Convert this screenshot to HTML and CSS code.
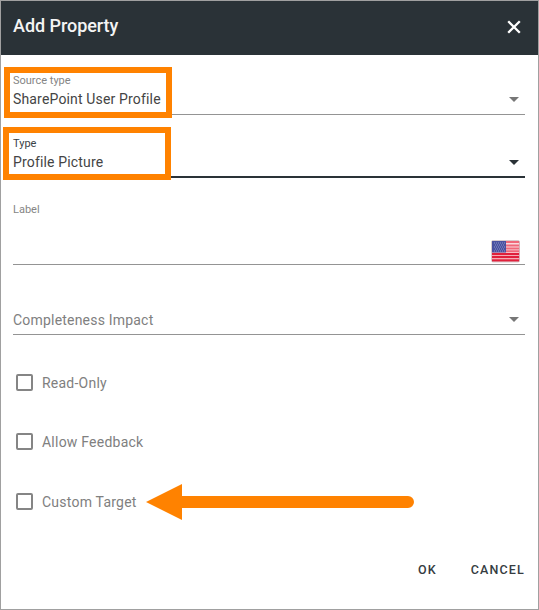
FILE: index.html
```html
<!DOCTYPE html>
<html lang="en">
<head>
<meta charset="utf-8">
<title>Add Property</title>
<link rel="stylesheet" href="styles.css">
</head>
<body>
<main class="dialog">
  <header class="header">
    <h1 class="title">Add Property</h1>
    <svg class="close" width="14" height="14" viewBox="0 0 14 14"><path d="M1.2 1.2 12.8 12.8M12.8 1.2 1.2 12.8"/></svg>
  </header>
  <form class="form">
    <div class="field source">
      <label class="label">Source type</label>
      <div class="value"><span class="text">SharePoint User Profile</span><svg class="caret" width="10" height="5" viewBox="0 0 10 5"><path d="M0 0h10L5 5z"/></svg></div>
      <div class="highlight highlight-source"></div>
    </div>
    <div class="field type">
      <label class="label">Type</label>
      <div class="value"><span class="text">Profile Picture</span><svg class="caret" width="10" height="5" viewBox="0 0 10 5"><path d="M0 0h10L5 5z"/></svg></div>
      <div class="highlight highlight-type"></div>
    </div>
    <div class="field name">
      <label class="label">Label</label>
      <svg class="flag" width="30" height="23" viewBox="0 0 30 23">
        <rect x="1" y="1" width="28" height="21" rx="1" fill="#fbd9dd"/>
        <path d="M1 1h27v2H1zM1 4.5h27v2H1zM1 7.5h27v2H1zM1 10.2h27v2H1z" fill="#f0687a"/>
        <path d="M1 13h27v2.2H1zM1 16.1h27v2.2H1zM1 19.2h27v2.2H1z" fill="#e0203b"/>
        <rect x="1" y="1" width="14" height="11.5" fill="#4a51a0"/>
        <path d="M3 3h11M4 5h10M3 7h11M4 9h10M3 11h11" stroke="#8f96c8" stroke-dasharray="1 1"/>
        <rect x=".5" y=".5" width="28" height="21.5" rx="1.5" fill="none" stroke="#a08088" stroke-opacity=".4"/>
      </svg>
    </div>
    <div class="field impact">
      <div class="value"><span class="text">Completeness Impact</span><svg class="caret" width="10" height="5" viewBox="0 0 10 5"><path d="M0 0h10L5 5z"/></svg></div>
    </div>
    <div class="checks">
      <div class="check"><span class="box"></span><span class="check-text">Read-Only</span></div>
      <div class="check"><span class="box"></span><span class="check-text">Allow Feedback</span></div>
      <div class="check"><span class="box"></span><span class="check-text">Custom Target</span>
        <svg class="arrow" width="269" height="38" viewBox="0 0 269 38"><path d="M0 19 36 1v12h226a6 6 0 0 1 0 12H36v12z"/></svg>
      </div>
    </div>
  </form>
  <footer class="actions"><span>OK</span><span>CANCEL</span></footer>
</main>
</body>
</html>
```
FILE: styles.css
```css
* { box-sizing: border-box; }
body { margin: 0; font-family: Roboto, sans-serif; background: #fff; }
.dialog { width: 539px; height: 610px; border: 1px solid #a0a0a0; overflow: hidden; }
.header { height: 54px; background: #2a3237; display: flex; align-items: center; justify-content: space-between; padding: 0 17px 4px 12px; }
.title { margin: 0; color: #f4f4f4; font-size: 18px; line-height: 24px; font-weight: 500; letter-spacing: -.05px; }
.close { fill: none; stroke: #fff; stroke-width: 2.3; margin-top: 2px; }
.form { padding: 0 13px 0 12px; }
.field { position: relative; border-bottom: 1px solid #949494; color: #444; }
.source { height: 60px; padding-top: 18px; }
.type { height: 63px; padding-top: 21px; border-bottom: 2px solid #2a3237; }
.name { height: 87px; padding-top: 24px; }
.impact { height: 70px; padding-top: 45px; }
.label { display: block; font-size: 11px; line-height: 16px; color: #858585; }
.type .label { color: #3b4246; }
.value { display: flex; align-items: center; justify-content: space-between; height: 20px; padding-right: 6px; font-size: 14px; }
.text { white-space: nowrap; letter-spacing: .16px; }
.caret { fill: #777; }
.type .caret { fill: #2a3237; }
.impact .value { color: #808080; }
.impact .text { letter-spacing: .2px; }
.impact .caret { margin-bottom: 2px; }
.flag { display: block; margin: 22px 4px 0 auto; }
.highlight { position: absolute; border: 6px solid #ff8200; }
.highlight-source { left: -9px; top: 12px; width: 168px; height: 51px; }
.highlight-type { left: -10px; top: 12px; width: 168px; height: 53px; }
.checks { padding: 35px 0 0 3px; display: grid; grid-template-rows: 24px 24px 24px; row-gap: 35.5px; }
.check { display: flex; align-items: center; position: relative; }
.box { width: 17px; height: 17px; border: 2px solid #858585; border-radius: 2px; flex: none; }
.check-text { margin-left: 9px; font-size: 14px; line-height: 20px; letter-spacing: .23px; color: #808080; padding-top: 1px; }
.arrow { position: absolute; left: 130px; top: -6px; fill: #ff8200; }
.actions { display: flex; justify-content: flex-end; gap: 34px; margin-top: 47px; padding-right: 13px; font-size: 12.5px; line-height: 20px; font-weight: 500; letter-spacing: 1.15px; color: #353c41; }
```
